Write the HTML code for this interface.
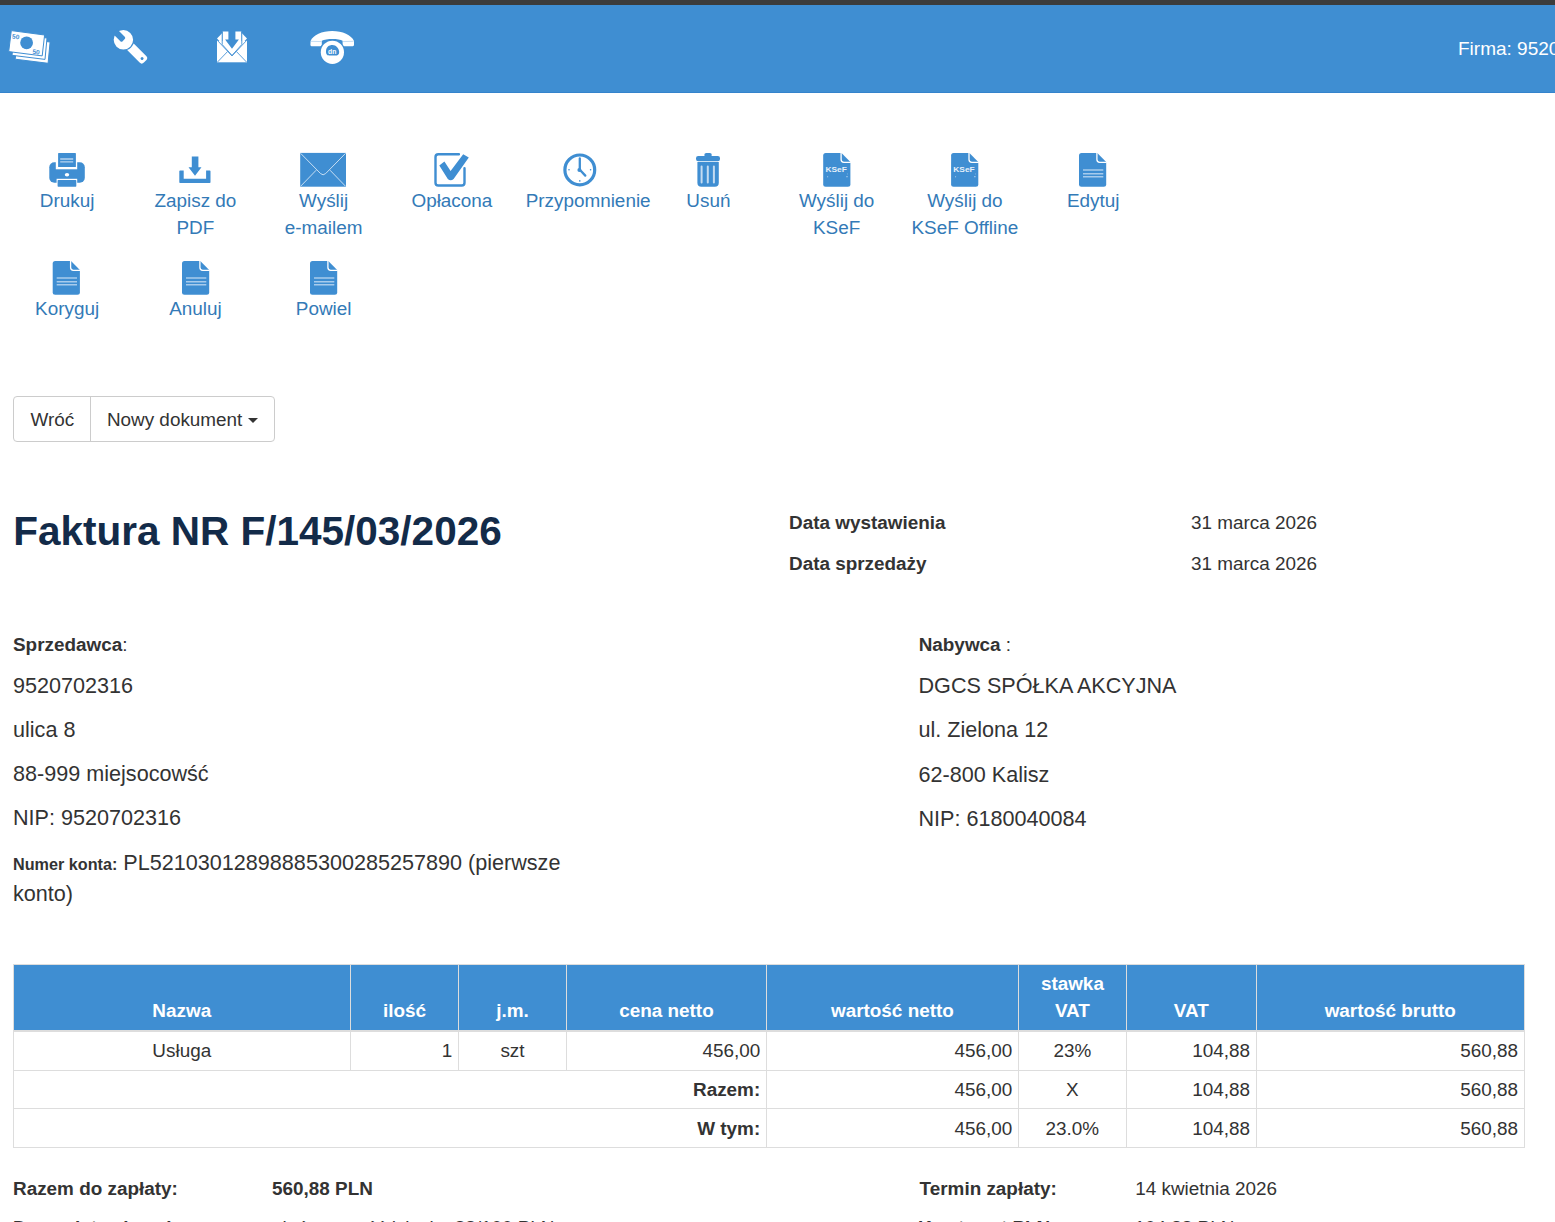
<!DOCTYPE html>
<html lang="pl">
<head>
<meta charset="utf-8">
<title>Faktura</title>
<style>
html,body{margin:0;padding:0;background:#fff;}
body{width:1555px;height:1222px;overflow:hidden;position:relative;font-family:"Liberation Sans",sans-serif;font-size:18.9px;line-height:27px;color:#333;}
.abs{position:absolute;white-space:nowrap;}
#topbar{position:absolute;left:0;top:0;width:1555px;height:5px;background:#3c3c3c;}
#nav{position:absolute;left:0;top:5px;width:1555px;height:87px;background:#3f8ed2;border-bottom:1px solid #3483cc;}
#nav svg{position:absolute;}
#firma{position:absolute;left:1458px;top:35px;color:#fff;font-size:19px;line-height:27px;white-space:nowrap;}
.tb{position:absolute;width:128px;text-align:center;color:#337ab7;}
.tb svg{position:absolute;top:0;}
.tb .lbl{position:absolute;left:0;width:128px;top:34px;white-space:nowrap;}
.tbl{position:absolute;width:128px;text-align:center;color:#337ab7;white-space:nowrap;}

.b{font-weight:bold;}
.t19{position:absolute;white-space:nowrap;font-size:18.9px;line-height:27px;}
.t22{position:absolute;white-space:nowrap;font-size:21.6px;line-height:30.86px;}
#btng{position:absolute;left:13px;top:396px;width:260.4px;height:43.7px;border:1px solid #ccc;border-radius:4px;}
#btng .div{position:absolute;left:75.9px;top:0;width:1px;height:100%;background:#ccc;}
.caret{position:absolute;width:0;height:0;border-left:5.4px solid transparent;border-right:5.4px solid transparent;border-top:5.4px solid #333;}
#title{position:absolute;left:13.2px;top:509.1px;font-size:40.5px;line-height:45px;font-weight:bold;color:#132b49;white-space:nowrap;}

.ln{position:absolute;background:#ddd;}
.th{position:absolute;white-space:nowrap;font-size:18.9px;line-height:27px;font-weight:bold;color:#fff;text-align:center;}
.td{position:absolute;white-space:nowrap;font-size:18.9px;line-height:27px;}
</style>
</head>
<body>
<div id="topbar"></div>
<div id="nav">
<svg style="left:0;top:0" width="400" height="87" viewBox="0 5 400 87">
 <!-- money stack -->
 <g fill="#fff" stroke="#3f8ed2" stroke-width="1" stroke-linejoin="round">
  <polygon points="17.5,38 50.1,42 48.1,63.3 15.2,59.2"/>
  <polygon points="14.5,34 47,38 45,59.4 12,55.3"/>
  <polygon points="11.3,30.6 44.6,35 42.2,55.9 8.7,51.6"/>
 </g>
 <circle cx="26.6" cy="42.8" r="6.4" fill="#3f8ed2"/>
 <g fill="#3f8ed2" font-family="Liberation Sans" font-size="6.6" font-weight="bold">
  <text x="11.8" y="38.6" transform="rotate(7 11.8 38.6)">50</text>
  <text x="32.2" y="53.8" transform="rotate(7 32.2 53.8)">50</text>
 </g>
 <!-- wrench -->
 <g transform="translate(123.4 39.8) rotate(45)">
  <rect x="8" y="-4.65" width="22.6" height="9.3" rx="3" fill="#fff"/>
  <circle cx="0" cy="0" r="10.8" fill="#3f8ed2"/>
  <circle cx="0" cy="0" r="9.7" fill="#fff"/>
  <rect x="-12" y="-3.1" width="12.4" height="6.2" rx="1.6" fill="#3f8ed2"/>
  <circle cx="26.4" cy="0" r="1.5" fill="#3f8ed2"/>
 </g>
 <!-- envelope download -->
 <g>
  <polygon points="217,41 247,41 247,62.3 217,62.3" fill="#fff"/>
  <polygon points="217,38.5 222.3,33 222.3,44" fill="#fff"/>
  <polygon points="247,38.5 241.7,33 241.7,44" fill="#fff"/>
  <path d="M217,40 L232,56 L247,40" fill="none" stroke="#5d9fdb" stroke-width="1"/>
  <path d="M217.5,62 L227.8,51.3 M246.5,62 L236.2,51.3" fill="none" stroke="#5d9fdb" stroke-width="1"/>
  <path d="M222.7,31.5 L241.3,31.5 L241.3,44.5 L232,55 L222.7,44.5 Z" fill="#fff"/>
  <path d="M228.4,29 L235.4,29 L235.4,39.4 L238.9,39.4 L232,48.8 L225.1,39.4 L228.4,39.4 Z" fill="#3f8ed2"/>
  <path d="M222.2,32 L222.2,44.5 L232,55.4 L241.8,44.5 L241.8,32" fill="none" stroke="#3f8ed2" stroke-width="0.9"/>
 </g>
 <!-- phone -->
 <g>
  <path d="M310.6,41 C313,35 322,31 332.2,31 C342.4,31 351.5,35 354,41 L354,45 C354,46 353,46.3 352,46.3 L344,46.3 C343,46.3 342.6,45.5 342.6,44.6 L342.6,40.8 C339,38.4 326,38.4 321.8,40.8 L321.8,44.6 C321.8,45.5 321.2,46.3 320.2,46.3 L312,46.3 C311,46.3 310.4,45.6 310.4,45 Z" fill="#fff"/>
  <path d="M311,41.3 L321.5,41.6 M343,41.6 L353.6,41.3" stroke="#a9cdee" stroke-width="0.7"/>
  <circle cx="332.4" cy="52.3" r="12.9" fill="#3f8ed2"/><circle cx="332.4" cy="52.3" r="11.6" fill="#fff"/>
  <path d="M326,51.5 C326,47 329,45 332.5,45 C336,45 339.2,48.5 339.2,52 C339.2,55 337,56 334,55.5 C330,55 326,57 326,51.5 Z" fill="#3f8ed2"/>
  <text x="328.1" y="54" font-family="Liberation Sans" font-weight="bold" font-size="6.8" fill="#fff">dn</text>
 </g>
</svg>
</div>
<div id="firma">Firma: 9520702316</div>
<svg class="abs" style="left:0;top:140px" width="1200" height="170" viewBox="0 140 1200 170">
<!-- printer -->
<rect x="49.3" y="162.3" width="35.5" height="20.4" rx="5" fill="#3f8ed2"/>
<rect x="55.8" y="158" width="21.4" height="11.3" fill="#fff"/>
<rect x="56.6" y="178.8" width="20.6" height="9" fill="#fff"/>
<rect x="58.1" y="153.1" width="17.8" height="13.9" rx="0.6" fill="#3f8ed2"/>
<rect x="57.6" y="180.1" width="18.7" height="6.6" rx="0.6" fill="#3f8ed2"/>
<path d="M60.2,159 H73.2 M60.2,161.9 H73.2" stroke="#b6d3ef" stroke-width="1.3"/>
<ellipse cx="67" cy="174.7" rx="2.2" ry="1.8" fill="#fff"/>
<!-- download -->
<path d="M179.3,171.3 Q179.3,170.5 180.1,170.5 H183.7 V178.8 H206.1 V170.5 H209.7 Q210.5,170.5 210.5,171.3 V182.2 Q210.5,183 209.7,183 H180.1 Q179.3,183 179.3,182.2 Z" fill="#3f8ed2"/>
<path d="M191.8,156.6 H198.4 V167.3 H201.5 L195,175.7 L188.5,167.3 H191.8 Z" fill="#3f8ed2"/>
<!-- envelope -->
<rect x="300.2" y="152.9" width="45.8" height="33.8" fill="#3f8ed2"/>
<path d="M300.6,153.3 L320.6,173.6 Q323.1,176 325.6,173.6 L345.6,153.3 M300.6,186.3 L316.2,170.2 M345.6,186.3 L330,170.2" fill="none" stroke="#d6e6f6" stroke-width="0.9"/>
<!-- checkbox -->
<path d="M458.9,154.3 H438.3 Q435.5,154.3 435.5,157.1 V182.7 Q435.5,185.5 438.3,185.5 H461.7 Q464.5,185.5 464.5,182.7 V168.3" fill="none" stroke="#3f8ed2" stroke-width="2.4" stroke-linecap="round"/>
<path d="M439.3,165.5 L444.4,161.6 L450.6,170.9 L463.2,154.3 L468.8,157.6 L453.6,179 Q450.6,181.6 447.8,179 Z" fill="#3f8ed2"/>
<!-- clock -->
<circle cx="579.8" cy="169.9" r="14.9" fill="none" stroke="#3f8ed2" stroke-width="3.2"/>
<path d="M579.8,158.4 V169.8 L585.3,175.6" fill="none" stroke="#3f8ed2" stroke-width="2.3" stroke-linejoin="round" stroke-linecap="round"/>
<circle cx="579.4" cy="170.1" r="2" fill="#3f8ed2"/>
<circle cx="569" cy="169.8" r="0.8" fill="#3f8ed2"/><circle cx="590.6" cy="169.8" r="0.8" fill="#3f8ed2"/><circle cx="579.8" cy="180.9" r="0.8" fill="#3f8ed2"/>
<!-- trash -->
<rect x="704.3" y="153.1" width="7.5" height="4" rx="2" fill="#3f8ed2"/>
<rect x="696" y="156" width="24" height="5.2" rx="2.2" fill="#3f8ed2"/>
<path d="M697.4,161.9 H718.8 V182.7 Q718.8,186.7 714.8,186.7 H701.4 Q697.4,186.7 697.4,182.7 Z" fill="#3f8ed2"/>
<path d="M701.6,166.4 V182.6 M707.8,166.4 V182.6 M713.9,166.4 V182.6" stroke="#c4dbf1" stroke-width="2" stroke-linecap="round"/>
<g transform="translate(823.2 153.1)"><path d="M2.5,0 H18.3 L27.2,8.9 V31.1 Q27.2,33.6 24.7,33.6 H2.5 Q0,33.6 0,31.1 V2.5 Q0,0 2.5,0 Z" fill="#3f8ed2"/><path d="M17.9,-0.5 V6.5 Q17.9,9.3 20.7,9.3 H27.7" fill="none" stroke="#fff" stroke-width="1.3"/><text x="2.2" y="19.2" font-family="Liberation Sans" font-weight="bold" font-size="7.6" fill="#e6f0fa" textLength="21.4" lengthAdjust="spacingAndGlyphs">KSeF</text><circle cx="4.5" cy="23.6" r="0.5" fill="#d0e2f5"/><circle cx="23.8" cy="23.6" r="0.6" fill="#d0e2f5"/><circle cx="24.3" cy="20.8" r="0.4" fill="#d0e2f5"/></g>
<g transform="translate(951.1 153.1)"><path d="M2.5,0 H18.3 L27.2,8.9 V31.1 Q27.2,33.6 24.7,33.6 H2.5 Q0,33.6 0,31.1 V2.5 Q0,0 2.5,0 Z" fill="#3f8ed2"/><path d="M17.9,-0.5 V6.5 Q17.9,9.3 20.7,9.3 H27.7" fill="none" stroke="#fff" stroke-width="1.3"/><text x="2.2" y="19.2" font-family="Liberation Sans" font-weight="bold" font-size="7.6" fill="#e6f0fa" textLength="21.4" lengthAdjust="spacingAndGlyphs">KSeF</text><circle cx="4.5" cy="23.6" r="0.5" fill="#d0e2f5"/><circle cx="23.8" cy="23.6" r="0.6" fill="#d0e2f5"/><circle cx="24.3" cy="20.8" r="0.4" fill="#d0e2f5"/></g>
<g transform="translate(1079 153.1)"><path d="M2.5,0 H18.3 L27.2,8.9 V31.1 Q27.2,33.6 24.7,33.6 H2.5 Q0,33.6 0,31.1 V2.5 Q0,0 2.5,0 Z" fill="#3f8ed2"/><path d="M17.9,-0.5 V6.5 Q17.9,9.3 20.7,9.3 H27.7" fill="none" stroke="#fff" stroke-width="1.3"/><path d="M4,16.8 H24.3 M4,20.6 H24.3 M4,23.7 H24.3" stroke="#a8cbec" stroke-width="1.5"/></g>
<g transform="translate(52.7 261.1)"><path d="M2.5,0 H18.3 L27.2,8.9 V31.1 Q27.2,33.6 24.7,33.6 H2.5 Q0,33.6 0,31.1 V2.5 Q0,0 2.5,0 Z" fill="#3f8ed2"/><path d="M17.9,-0.5 V6.5 Q17.9,9.3 20.7,9.3 H27.7" fill="none" stroke="#fff" stroke-width="1.3"/><path d="M4,16.8 H24.3 M4,20.6 H24.3 M4,23.7 H24.3" stroke="#a8cbec" stroke-width="1.5"/></g>
<g transform="translate(182 261.1)"><path d="M2.5,0 H18.3 L27.2,8.9 V31.1 Q27.2,33.6 24.7,33.6 H2.5 Q0,33.6 0,31.1 V2.5 Q0,0 2.5,0 Z" fill="#3f8ed2"/><path d="M17.9,-0.5 V6.5 Q17.9,9.3 20.7,9.3 H27.7" fill="none" stroke="#fff" stroke-width="1.3"/><path d="M4,16.8 H24.3 M4,20.6 H24.3 M4,23.7 H24.3" stroke="#a8cbec" stroke-width="1.5"/></g>
<g transform="translate(310 261.1)"><path d="M2.5,0 H18.3 L27.2,8.9 V31.1 Q27.2,33.6 24.7,33.6 H2.5 Q0,33.6 0,31.1 V2.5 Q0,0 2.5,0 Z" fill="#3f8ed2"/><path d="M17.9,-0.5 V6.5 Q17.9,9.3 20.7,9.3 H27.7" fill="none" stroke="#fff" stroke-width="1.3"/><path d="M4,16.8 H24.3 M4,20.6 H24.3 M4,23.7 H24.3" stroke="#a8cbec" stroke-width="1.5"/></g>
</svg>
<div class="tbl" style="left:3.15px;top:186.6px">Drukuj</div>
<div class="tbl" style="left:131.40px;top:186.6px">Zapisz do<br>PDF</div>
<div class="tbl" style="left:259.65px;top:186.6px">Wyślij<br>e-mailem</div>
<div class="tbl" style="left:387.90px;top:186.6px">Opłacona</div>
<div class="tbl" style="left:525.65px;top:186.6px;text-align:left;width:auto">Przypomnienie</div>
<div class="tbl" style="left:644.40px;top:186.6px">Usuń</div>
<div class="tbl" style="left:772.65px;top:186.6px">Wyślij do<br>KSeF</div>
<div class="tbl" style="left:900.90px;top:186.6px">Wyślij do<br>KSeF Offline</div>
<div class="tbl" style="left:1029.15px;top:186.6px">Edytuj</div>
<div class="tbl" style="left:3.15px;top:294.8px">Koryguj</div>
<div class="tbl" style="left:131.40px;top:294.8px">Anuluj</div>
<div class="tbl" style="left:259.65px;top:294.8px">Powiel</div>

<div id="btng"><div class="div"></div></div>
<div class="t19 " style="left:30.5px;top:405.85px">Wróć</div>
<div class="t19 " style="left:106.9px;top:405.85px">Nowy dokument</div>
<div class="caret" style="left:248px;top:417.6px"></div>
<div id="title">Faktura NR F/145/03/2026</div>
<div class="t19 b" style="left:789px;top:509.05px">Data wystawienia</div>
<div class="t19 b" style="left:789px;top:549.75px">Data sprzedaży</div>
<div class="t19 " style="left:1190.9px;top:509.05px">31 marca 2026</div>
<div class="t19 " style="left:1190.9px;top:549.75px">31 marca 2026</div>
<div class="t19 " style="left:13px;top:630.65px"><b>Sprzedawca</b>:</div>
<div class="t22" style="left:13px;top:670.78px">9520702316</div>
<div class="t22" style="left:13px;top:714.88px">ulica 8</div>
<div class="t22" style="left:13px;top:759.48px">88-999 miejsocowść</div>
<div class="t22" style="left:13px;top:803.28px">NIP: 9520702316</div>
<div class="t22" style="left:13px;top:848.31px;line-height:30px"><b style="font-size:16.2px">Numer konta:</b> PL52103012898885300285257890 (pierwsze<br>konto)</div>
<div class="t19 " style="left:918.7px;top:630.85px"><b>Nabywca</b> :</div>
<div class="t22" style="left:918.5px;top:670.88px">DGCS SPÓŁKA AKCYJNA</div>
<div class="t22" style="left:918.5px;top:715.08px">ul. Zielona 12</div>
<div class="t22" style="left:918.5px;top:759.58px">62-800 Kalisz</div>
<div class="t22" style="left:918.5px;top:803.58px">NIP: 6180040084</div>
<div style="position:absolute;left:13px;top:964px;width:1512px;height:67px;background:#3f8ed2;"></div>
<div class="ln" style="left:13px;top:964px;width:1512px;height:1px"></div>
<div class="ln" style="left:13px;top:1030px;width:1512px;height:2px"></div>
<div class="ln" style="left:13px;top:1070px;width:1512px;height:1px"></div>
<div class="ln" style="left:13px;top:1108px;width:1512px;height:1px"></div>
<div class="ln" style="left:13px;top:1147px;width:1512px;height:1px"></div>
<div class="ln" style="left:13px;top:964px;width:1px;height:184px"></div>
<div class="ln" style="left:350px;top:964px;width:1px;height:107px"></div>
<div class="ln" style="left:458px;top:964px;width:1px;height:107px"></div>
<div class="ln" style="left:566px;top:964px;width:1px;height:107px"></div>
<div class="ln" style="left:766px;top:964px;width:1px;height:184px"></div>
<div class="ln" style="left:1018px;top:964px;width:1px;height:184px"></div>
<div class="ln" style="left:1126px;top:964px;width:1px;height:184px"></div>
<div class="ln" style="left:1256px;top:964px;width:1px;height:184px"></div>
<div class="ln" style="left:1524px;top:964px;width:1px;height:184px"></div>
<div class="th" style="left:13.0px;width:337.5px;top:996.95px">Nazwa</div>
<div class="th" style="left:350.5px;width:108.0px;top:996.95px">ilość</div>
<div class="th" style="left:458.5px;width:108.0px;top:996.95px">j.m.</div>
<div class="th" style="left:566.5px;width:199.9px;top:996.95px">cena netto</div>
<div class="th" style="left:766.4px;width:252.0px;top:996.95px">wartość netto</div>
<div class="th" style="left:1018.4px;width:108.0px;top:969.95px">stawka<br>VAT</div>
<div class="th" style="left:1126.4px;width:129.9px;top:996.95px">VAT</div>
<div class="th" style="left:1256.3px;width:267.9px;top:996.95px">wartość brutto</div>
<div class="td" style="left:13.0px;width:337.5px;top:1037.25px;text-align:center;">Usługa</div>
<div class="td" style="left:350.5px;width:108.0px;top:1037.25px;text-align:right;padding-right:6.2px;box-sizing:border-box;">1</div>
<div class="td" style="left:458.5px;width:108.0px;top:1037.25px;text-align:center;">szt</div>
<div class="td" style="left:566.5px;width:199.9px;top:1037.25px;text-align:right;padding-right:6.2px;box-sizing:border-box;">456,00</div>
<div class="td" style="left:766.4px;width:252.0px;top:1037.25px;text-align:right;padding-right:6.2px;box-sizing:border-box;">456,00</div>
<div class="td" style="left:1018.4px;width:108.0px;top:1037.25px;text-align:center;">23%</div>
<div class="td" style="left:1126.4px;width:129.9px;top:1037.25px;text-align:right;padding-right:6.2px;box-sizing:border-box;">104,88</div>
<div class="td" style="left:1256.3px;width:267.9px;top:1037.25px;text-align:right;padding-right:6.2px;box-sizing:border-box;">560,88</div>
<div class="td" style="left:13.0px;width:753.4px;top:1076.45px;text-align:right;padding-right:6.2px;box-sizing:border-box;font-weight:bold;">Razem:</div>
<div class="td" style="left:766.4px;width:252.0px;top:1076.45px;text-align:right;padding-right:6.2px;box-sizing:border-box;">456,00</div>
<div class="td" style="left:1018.4px;width:108.0px;top:1076.45px;text-align:center;">X</div>
<div class="td" style="left:1126.4px;width:129.9px;top:1076.45px;text-align:right;padding-right:6.2px;box-sizing:border-box;">104,88</div>
<div class="td" style="left:1256.3px;width:267.9px;top:1076.45px;text-align:right;padding-right:6.2px;box-sizing:border-box;">560,88</div>
<div class="td" style="left:13.0px;width:753.4px;top:1115.35px;text-align:right;padding-right:6.2px;box-sizing:border-box;font-weight:bold;">W tym:</div>
<div class="td" style="left:766.4px;width:252.0px;top:1115.35px;text-align:right;padding-right:6.2px;box-sizing:border-box;">456,00</div>
<div class="td" style="left:1018.4px;width:108.0px;top:1115.35px;text-align:center;">23.0%</div>
<div class="td" style="left:1126.4px;width:129.9px;top:1115.35px;text-align:right;padding-right:6.2px;box-sizing:border-box;">104,88</div>
<div class="td" style="left:1256.3px;width:267.9px;top:1115.35px;text-align:right;padding-right:6.2px;box-sizing:border-box;">560,88</div>
<div class="t19 b" style="left:13px;top:1174.65px">Razem do zapłaty:</div>
<div class="t19 b" style="left:272px;top:1174.65px">560,88 PLN</div>
<div class="t19 b" style="left:919.6px;top:1174.65px">Termin zapłaty:</div>
<div class="t19 " style="left:1135.2px;top:1174.65px">14 kwietnia 2026</div>
<div class="t19 b" style="left:13px;top:1213.95px">Do zapłaty słownie:</div>
<div class="t19 " style="left:272px;top:1213.95px">pięćset sześćdziesiąt 88/100 PLN</div>
<div class="t19 b" style="left:918px;top:1213.95px">Kwota vat PLN:</div>
<div class="t19 " style="left:1134.5px;top:1213.95px">104,88 PLN</div>
</body>
</html>
